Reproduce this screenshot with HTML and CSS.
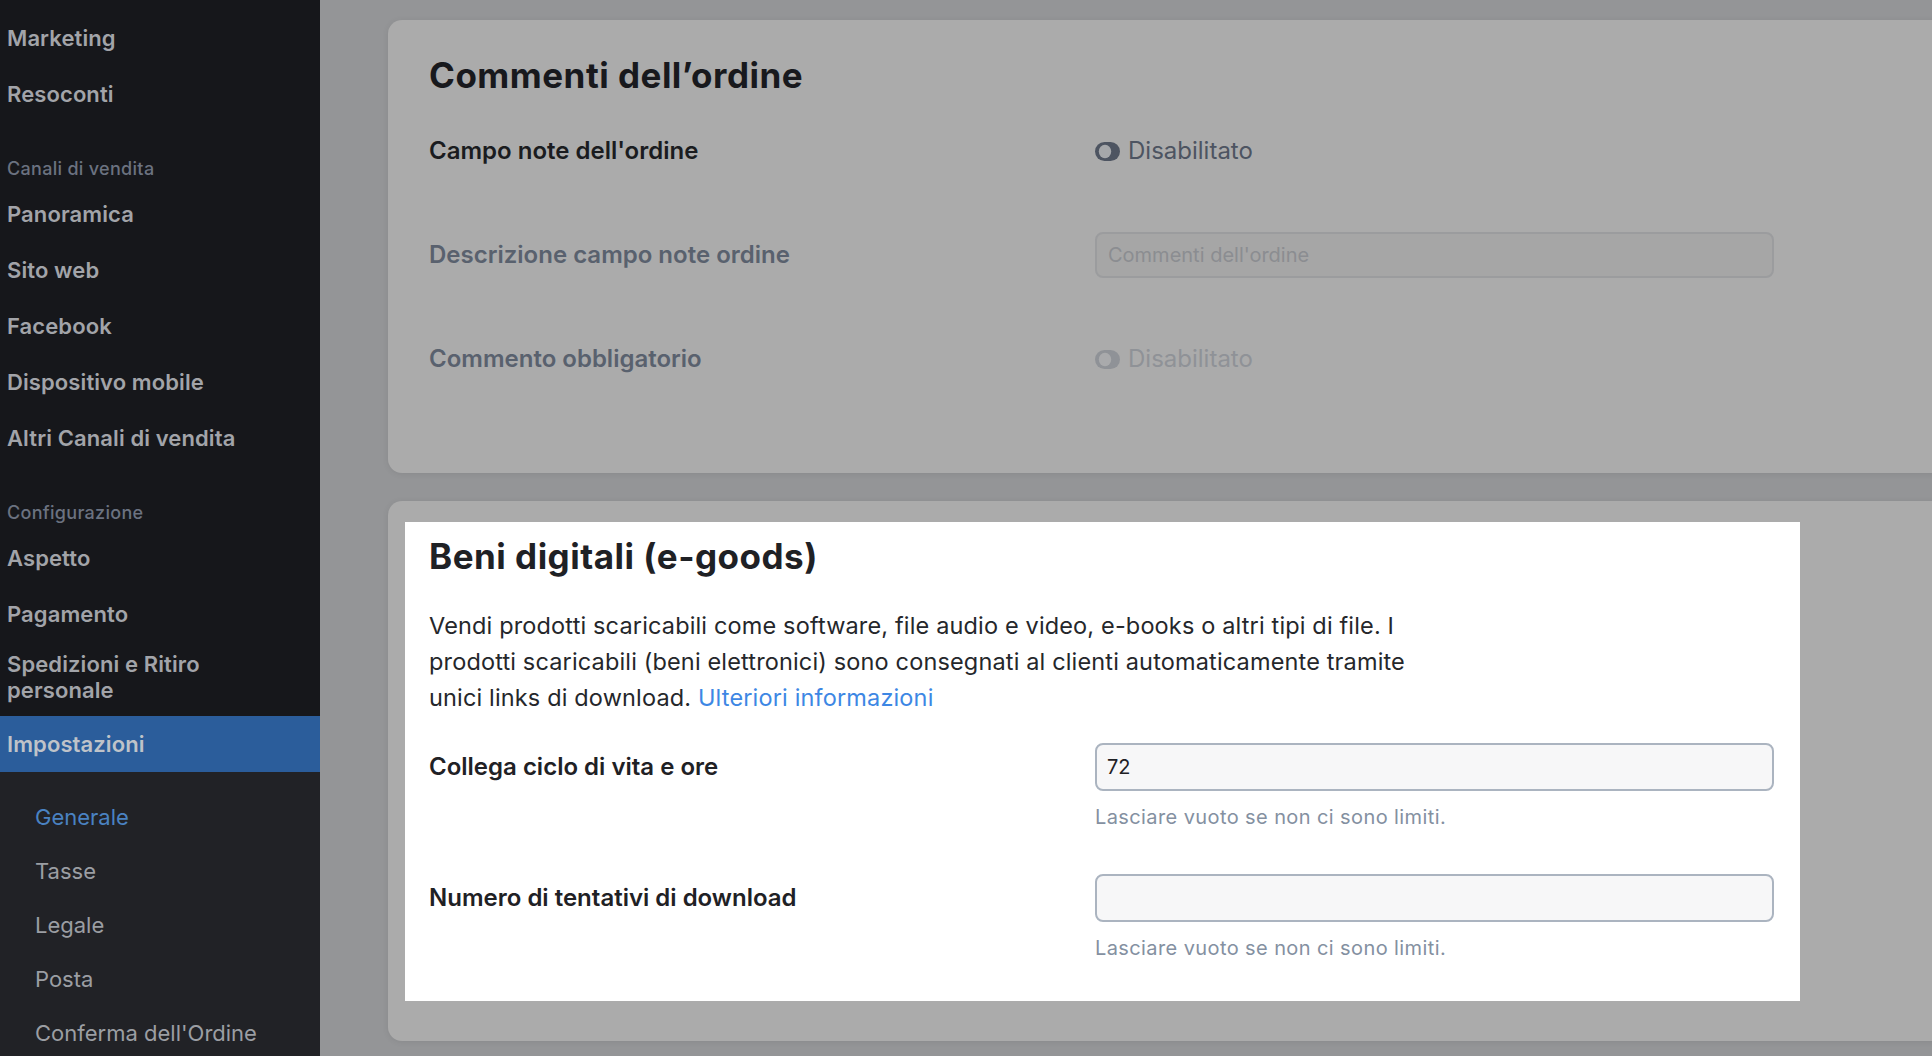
FILE: index.html
```html
<!DOCTYPE html>
<html lang="it">
<head>
<meta charset="utf-8">
<title>Impostazioni - Generale</title>
<link rel="stylesheet" href="styles.css">
</head>
<body>
<div class="app">
  <aside class="sidebar">
    <nav class="nav-main">
      <a class="nav-item">Marketing</a>
      <a class="nav-item">Resoconti</a>
      <div class="nav-section">Canali di vendita</div>
      <a class="nav-item">Panoramica</a>
      <a class="nav-item">Sito web</a>
      <a class="nav-item">Facebook</a>
      <a class="nav-item">Dispositivo mobile</a>
      <a class="nav-item">Altri Canali di vendita</a>
      <div class="nav-section">Configurazione</div>
      <a class="nav-item">Aspetto</a>
      <a class="nav-item">Pagamento</a>
      <a class="nav-item nav-item--multi">Spedizioni e Ritiro personale</a>
      <a class="nav-item nav-item--active">Impostazioni</a>
    </nav>
    <div class="nav-sub">
      <a class="sub-item sub-item--active">Generale</a>
      <a class="sub-item">Tasse</a>
      <a class="sub-item">Legale</a>
      <a class="sub-item">Posta</a>
      <a class="sub-item">Conferma dell'Ordine</a>
    </div>
  </aside>

  <main class="content">
    <section class="card card--comments">
      <h2 class="card-title">Commenti dell’ordine</h2>
      <div class="field-row">
        <div class="field-label">Campo note dell'ordine</div>
        <div class="toggle">
          <svg class="toggle-icon" width="25" height="19" viewBox="0 0 25 19" aria-hidden="true">
            <rect x="0" y="0" width="25" height="19" rx="9.5" fill="currentColor"/>
            <ellipse cx="10" cy="9.5" rx="6.2" ry="6.8" class="toggle-knob"/>
          </svg>
          <span>Disabilitato</span>
        </div>
      </div>
      <div class="field-row field-row--muted">
        <div class="field-label">Descrizione campo note ordine</div>
        <div class="text-input text-input--dim"><span class="placeholder">Commenti dell'ordine</span></div>
      </div>
      <div class="field-row field-row--muted">
        <div class="field-label">Commento obbligatorio</div>
        <div class="toggle toggle--faded">
          <svg class="toggle-icon" width="25" height="19" viewBox="0 0 25 19" aria-hidden="true">
            <rect x="0" y="0" width="25" height="19" rx="9.5" fill="currentColor"/>
            <ellipse cx="10" cy="9.5" rx="6.2" ry="6.8" class="toggle-knob"/>
          </svg>
          <span>Disabilitato</span>
        </div>
      </div>
    </section>

    <section class="card card--goods">
      <div class="spotlight">
        <h2 class="card-title">Beni digitali (e-goods)</h2>
        <p class="desc">Vendi prodotti scaricabili come software, file audio e video, e-books o altri tipi di file. I prodotti scaricabili (beni elettronici) sono consegnati al clienti automaticamente tramite unici links di download. <a class="link">Ulteriori informazioni</a></p>
        <div class="field">
          <div class="field-label">Collega ciclo di vita e ore</div>
          <div class="text-input"><span class="value">72</span></div>
          <div class="help">Lasciare vuoto se non ci sono limiti.</div>
        </div>
        <div class="field field--second">
          <div class="field-label">Numero di tentativi di download</div>
          <div class="text-input"></div>
          <div class="help">Lasciare vuoto se non ci sono limiti.</div>
        </div>
      </div>
    </section>
  </main>
</div>
</body>
</html>
```

FILE: styles.css
```css
* { box-sizing: border-box; }

html, body {
  margin: 0;
  padding: 0;
  height: 100%;
}

body {
  font-family: Inter, "Noto Sans", "Liberation Sans", sans-serif;
  background: #949597;
  overflow: hidden;
}

.app {
  display: flex;
  height: 1056px;
}

/* ---------- Sidebar ---------- */
.sidebar {
  width: 320px;
  flex: 0 0 320px;
  display: flex;
  flex-direction: column;
  background: #16171b;
  overflow: hidden;
}

.nav-main {
  display: flex;
  flex-direction: column;
  padding-top: 10px;
}

.nav-item {
  display: flex;
  align-items: center;
  min-height: 56px;
  padding: 11px 40px 11px 7px;
  font-size: 22px;
  line-height: 26px;
  font-weight: 600;
  color: #a2a4a9;
  letter-spacing: 0.1px;
}

.nav-item--multi {
  min-height: 74px;
  padding-top: 9px;
  padding-bottom: 13px;
}

.nav-item--active {
  background: #2b5d9b;
  color: #bfc3c9;
}

.nav-section {
  padding: 36px 7px 6px;
  font-size: 18px;
  line-height: 22px;
  font-weight: 500;
  letter-spacing: 0.3px;
  color: #6b7280;
}

.nav-sub {
  flex: 1;
  background: #212226;
  padding-top: 18px;
  display: flex;
  flex-direction: column;
}

.sub-item {
  display: flex;
  align-items: center;
  height: 54px;
  padding-left: 35px;
  font-size: 22px;
  line-height: 26px;
  color: #9b9ea3;
}

.sub-item--active {
  color: #4a82c2;
}

/* ---------- Content ---------- */
.content {
  flex: 1;
  overflow: hidden;
  padding: 20px 0 0 68px;
}

.card {
  width: 1700px;
  background: #ababab;
  border-radius: 14px;
  box-shadow: 0 1px 6px rgba(0, 0, 0, 0.08);
}

.card-title {
  margin: 0;
  font-size: 35px;
  line-height: 36px;
  font-weight: 700;
  color: #18191d;
  letter-spacing: 0.5px;
}

.card--comments {
  height: 453px;
  padding: 37px 0 0 41px;
}

.field-row {
  display: grid;
  grid-template-columns: 666px 679px;
  align-items: center;
  height: 104px;
}

.card--comments .field-row:first-of-type {
  margin-top: 6px;
}

.field-label {
  font-size: 24px;
  line-height: 30px;
  font-weight: 600;
  color: #1a1c20;
}

.field-row--muted .field-label {
  color: #59616e;
}

.toggle {
  display: flex;
  align-items: center;
  gap: 8px;
  font-size: 24px;
  line-height: 30px;
  color: #4d5461;
}

.toggle-icon {
  flex: 0 0 auto;
  color: #4d5461;
}

.toggle-knob {
  fill: #a5a7aa;
}

.toggle--faded,
.toggle--faded .toggle-icon {
  color: #8f9297;
}

.toggle--faded .toggle-knob {
  fill: #a9aaac;
}

.text-input {
  height: 47px;
  border: 2px solid #abb4c0;
  border-radius: 8px;
  background: #f7f7f8;
  display: flex;
  align-items: center;
  padding-left: 10px;
  font-size: 20px;
  color: #1d1f23;
}

.text-input--dim {
  height: 46px;
  background: #a6a6a6;
  border-color: #9b9c9e;
}

.placeholder {
  color: #8b8d91;
  padding-left: 1px;
}

/* ---------- Spotlighted card ---------- */
.card--goods {
  margin-top: 28px;
  padding: 21px 0 40px 17px;
}

.spotlight {
  width: 1395px;
  background: #ffffff;
  padding: 16px 26px 41px 24px;
}

.spotlight .card-title {
  color: #1f2125;
}

.desc {
  margin: 34px 0 0;
  max-width: 1000px;
  font-size: 23.5px;
  line-height: 36px;
  letter-spacing: 0.15px;
  color: #25272b;
}

.link {
  color: #3d87e4;
  text-decoration: none;
}

.field {
  display: grid;
  grid-template-columns: 666px 679px;
  grid-template-areas:
    "label input"
    ". help";
  align-items: center;
  margin-top: 27px;
}

.field--second {
  margin-top: 45px;
}

.field .field-label {
  grid-area: label;
  color: #1f2125;
}

.field .text-input {
  grid-area: input;
  height: 48px;
}

.help {
  grid-area: help;
  margin-top: 14px;
  font-size: 20px;
  line-height: 24px;
  color: #8490a1;
  letter-spacing: 0.4px;
}

.value {
  color: #1f2125;
}
```
